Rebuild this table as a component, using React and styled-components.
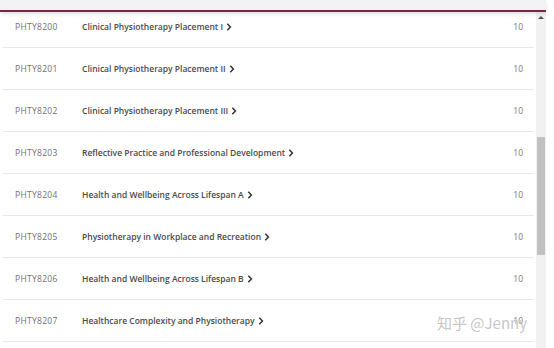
import styled, { createGlobalStyle } from "styled-components"

const courses = [
  { code: "PHTY8200", title: "Clinical Physiotherapy Placement I", units: 10 },
  { code: "PHTY8201", title: "Clinical Physiotherapy Placement II", units: 10 },
  { code: "PHTY8202", title: "Clinical Physiotherapy Placement III", units: 10 },
  { code: "PHTY8203", title: "Reflective Practice and Professional Development", units: 10 },
  { code: "PHTY8204", title: "Health and Wellbeing Across Lifespan A", units: 10 },
  { code: "PHTY8205", title: "Physiotherapy in Workplace and Recreation", units: 10 },
  { code: "PHTY8206", title: "Health and Wellbeing Across Lifespan B", units: 10 },
  { code: "PHTY8207", title: "Healthcare Complexity and Physiotherapy", units: 10 },
]

const GlobalStyle = createGlobalStyle`
  html, body {
    margin: 0;
    padding: 0;
    background: #fff;
  }
  body {
    width: 554px;
    height: 348px;
    overflow: hidden;
    font-family: "Open Sans", "Liberation Sans", sans-serif;
  }
`

const Chevron = () => (
  <svg width="6" height="8" viewBox="0 0 6 8" aria-hidden="true">
    <path d="M1.3 0.8 L4.4 4 L1.3 7.2" fill="none" stroke="#333" strokeWidth="1.5" />
  </svg>
)

export default function App() {
  return (
    <>
      <GlobalStyle />
      <Page>
        <Header />
        <Body>
          <List>
            <Rows>
              {courses.map(c => (
                <Row key={c.code}>
                  <Code>{c.code}</Code>
                  <Title>
                    {c.title}
                    <Chevron />
                  </Title>
                  <Units>{c.units}</Units>
                </Row>
              ))}
            </Rows>
          </List>
          <Scrollbar>
            <Arrow />
            <Thumb />
          </Scrollbar>
        </Body>
        <Watermark>知乎 @Jenny</Watermark>
      </Page>
    </>
  )
}

const Page = styled.div`
  position: relative;
  width: 546px;
  height: 348px;
  display: flex;
  flex-direction: column;
`

const Header = styled.div`
  height: 10px;
  flex: none;
  background: #f3f3f6;
  border-bottom: 2px solid #7a2350;
  box-shadow: 0 2px 4px rgba(0, 0, 0, 0.12);
  position: relative;
  z-index: 1;
`

const Body = styled.div`
  flex: 1;
  display: flex;
  min-height: 0;
`

const List = styled.div`
  flex: 1;
  overflow: hidden;
`

const Rows = styled.div`
  margin-top: -6px;
`

const Row = styled.div`
  height: 41px;
  margin: 0 2px 0 3px;
  display: flex;
  align-items: center;
  border-bottom: 1px solid #e9e9ea;
  font-size: 8.5px;
`

const Code = styled.div`
  width: 67px;
  padding-left: 12px;
  color: #707070;
  letter-spacing: 0.3px;
`

const Title = styled.div`
  flex: 1;
  display: flex;
  align-items: center;
  gap: 3px;
  color: #4a4a4a;
  font-weight: 600;
  letter-spacing: 0;
`

const Units = styled.div`
  padding-right: 11px;
  color: #7a7a7a;
`

const Scrollbar = styled.div`
  width: 10px;
  flex: none;
  background: #f1f1f1;
  display: flex;
  flex-direction: column;
  align-items: center;
`

const Arrow = styled.div`
  margin-top: 4px;
  width: 0;
  height: 0;
  border-left: 3px solid transparent;
  border-right: 3px solid transparent;
  border-bottom: 3px solid #505050;
`

const Thumb = styled.div`
  margin-top: 118px;
  width: 8px;
  height: 118px;
  background: #c1c1c1;
`

const Watermark = styled.div`
  position: absolute;
  left: 437px;
  top: 312px;
  font-family: "Noto Sans CJK SC", "Liberation Sans", sans-serif;
  font-size: 15px;
  color: rgba(140, 140, 140, 0.5);
  text-shadow: 0 0 1px rgba(255, 255, 255, 0.8);
  white-space: nowrap;
`
